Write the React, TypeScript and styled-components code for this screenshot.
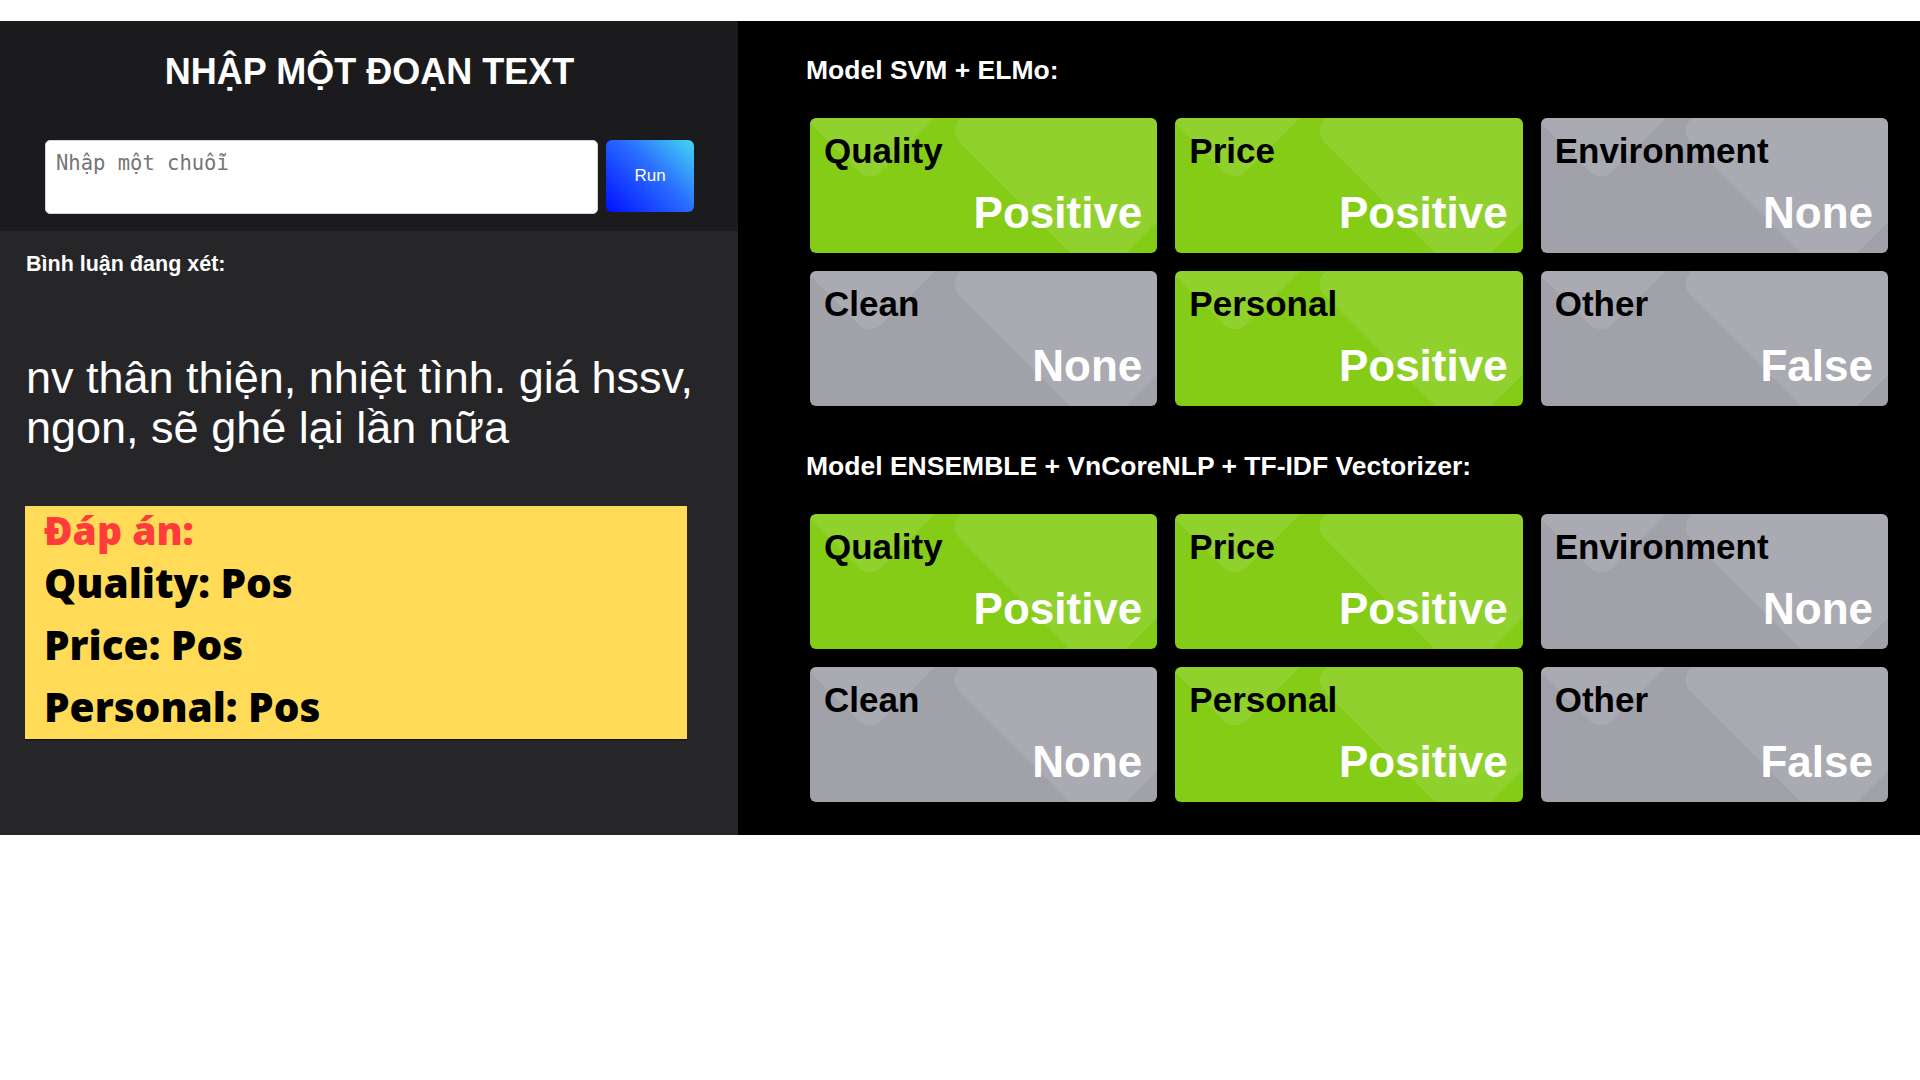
import React from "react";
import styled, { createGlobalStyle } from "styled-components";

interface Result {
  aspect: string;
  label: string;
}

interface Model {
  name: string;
  results: Result[];
}

const GlobalStyle = createGlobalStyle`
  html, body {
    margin: 0;
    padding: 0;
    background: #ffffff;
  }
  body {
    font-family: "Liberation Sans", Arial, sans-serif;
  }
  * {
    box-sizing: border-box;
  }
`;

const Page = styled.div`
  padding-top: 21px;
`;

const Main = styled.div`
  display: flex;
  align-items: stretch;
`;

// cột trái: nhập text + đáp án
const LeftPanel = styled.div`
  width: 738px;
  flex-shrink: 0;
  display: flex;
  flex-direction: column;
  background: #262628;
`;

const InputHeader = styled.div`
  background: #1b1b1d;
  padding: 30px 44px 17px 45px;
`;

const Heading = styled.h1`
  margin: 0;
  text-align: center;
  color: #ffffff;
  font-size: 36px;
  font-weight: 700;
  line-height: normal;
`;

const InputRow = styled.div`
  margin-top: 47px;
  display: flex;
  align-items: flex-start;
  gap: 8px;
`;

const TextBox = styled.textarea`
  flex: 1;
  height: 74px;
  padding: 10px 10px;
  border: 1px solid #cfd6df;
  border-radius: 5px;
  background: #ffffff;
  resize: none;
  outline: none;
  font-family: "DejaVu Sans Mono", "Liberation Mono", monospace;
  font-size: 20.5px;
  color: #222;

  &::placeholder {
    color: #757575;
  }
`;

const RunButton = styled.button`
  width: 88px;
  height: 72px;
  border: none;
  border-radius: 6px;
  background: linear-gradient(45deg, #0010ff 0%, #2a6cff 55%, #45d6f2 100%);
  color: #ffffff;
  font-family: "Liberation Sans", Arial, sans-serif;
  font-size: 17px;
  cursor: pointer;
`;

const CommentArea = styled.div`
  padding: 21px 25px 0 26px;
`;

const CommentLabel = styled.h4`
  margin: 0;
  color: #ffffff;
  font-size: 21.5px;
  font-weight: 700;
  line-height: normal;
`;

const CommentText = styled.p`
  margin: 76px 0 0 0;
  color: #ffffff;
  font-size: 45px;
  line-height: 50.4px;
`;

const AnswerBox = styled.div`
  margin-top: 52px;
  margin-left: -1px;
  width: 662px;
  padding: 2px 19px 1px 19px;
  background: #ffdb58;
  box-shadow: 0 1px 1px rgba(0, 0, 0, 0.45);
  font-family: "Open Sans", "Noto Sans", sans-serif;
  font-weight: 800;
`;

const AnswerTitle = styled.div`
  color: #ff3b3b;
  font-size: 39px;
  line-height: 44px;
`;

const AnswerLine = styled.div`
  color: #000000;
  font-size: 40.5px;
  line-height: 62px;
`;

// cột phải: kết quả các model
const RightPanel = styled.div`
  flex: 1;
  background: #000000;
  padding: 34px 32px 33px 68px;
`;

const ModelSection = styled.section`
  & + & {
    margin-top: 45px;
  }
`;

const ModelTitle = styled.h3`
  margin: 0;
  color: #ffffff;
  font-size: 26.5px;
  font-weight: 700;
  line-height: normal;
`;

const CardGrid = styled.div`
  margin: 32px 0 0 4px;
  display: grid;
  grid-template-columns: repeat(3, 1fr);
  gap: 18px;
`;

const Card = styled.div<{ $active: boolean }>`
  position: relative;
  overflow: hidden;
  height: 135px;
  padding: 13px 15px 15px 14px;
  border-radius: 6px;
  background: ${(p) => (p.$active ? "#84cc16" : "#a1a1aa")};
  display: flex;
  flex-direction: column;
  justify-content: space-between;

  &::before,
  &::after {
    content: "";
    position: absolute;
    width: 212px;
    height: 212px;
    border-radius: 16px;
    background: rgba(255, 255, 255, 0.1);
    transform: rotate(45deg);
  }
  &::before {
    left: -46px;
    top: -191px;
  }
  &::after {
    left: 182px;
    top: -93px;
  }
`;

const Aspect = styled.div`
  position: relative;
  z-index: 1;
  color: #000000;
  font-size: 35px;
  font-weight: 700;
  line-height: normal;
`;

const Verdict = styled.div`
  position: relative;
  z-index: 1;
  text-align: right;
  color: #ffffff;
  font-size: 44px;
  font-weight: 700;
  line-height: normal;
`;

const baseResults: Result[] = [
  { aspect: "Quality", label: "Positive" },
  { aspect: "Price", label: "Positive" },
  { aspect: "Environment", label: "None" },
  { aspect: "Clean", label: "None" },
  { aspect: "Personal", label: "Positive" },
  { aspect: "Other", label: "False" },
];

const models: Model[] = [
  { name: "Model SVM + ELMo:", results: baseResults },
  {
    name: "Model ENSEMBLE + VnCoreNLP + TF-IDF Vectorizer:",
    results: baseResults,
  },
];

const answers = ["Quality: Pos", "Price: Pos", "Personal: Pos"];

const App = () => {
  const renderCards = (results: Result[]) => {
    return results.map((r) => {
      const active = r.label !== "None" && r.label !== "False";
      return (
        <Card key={r.aspect} $active={active}>
          <Aspect>{r.aspect}</Aspect>
          <Verdict>{r.label}</Verdict>
        </Card>
      );
    });
  };

  return (
    <React.Fragment>
      <GlobalStyle />
      <Page>
        <Main>
          <LeftPanel>
            <InputHeader>
              <Heading>NHẬP MỘT ĐOẠN TEXT</Heading>
              <InputRow>
                <TextBox placeholder="Nhập một chuỗi" />
                <RunButton>Run</RunButton>
              </InputRow>
            </InputHeader>
            <CommentArea>
              <CommentLabel>Bình luận đang xét:</CommentLabel>
              <CommentText>
                nv thân thiện, nhiệt tình. giá hssv, ngon, sẽ ghé lại lần nữa
              </CommentText>
              <AnswerBox>
                <AnswerTitle>Đáp án:</AnswerTitle>
                {answers.map((a) => (
                  <AnswerLine key={a}>{a}</AnswerLine>
                ))}
              </AnswerBox>
            </CommentArea>
          </LeftPanel>

          <RightPanel>
            {models.map((m) => (
              <ModelSection key={m.name}>
                <ModelTitle>{m.name}</ModelTitle>
                <CardGrid>{renderCards(m.results)}</CardGrid>
              </ModelSection>
            ))}
          </RightPanel>
        </Main>
      </Page>
    </React.Fragment>
  );
};

export default App;
